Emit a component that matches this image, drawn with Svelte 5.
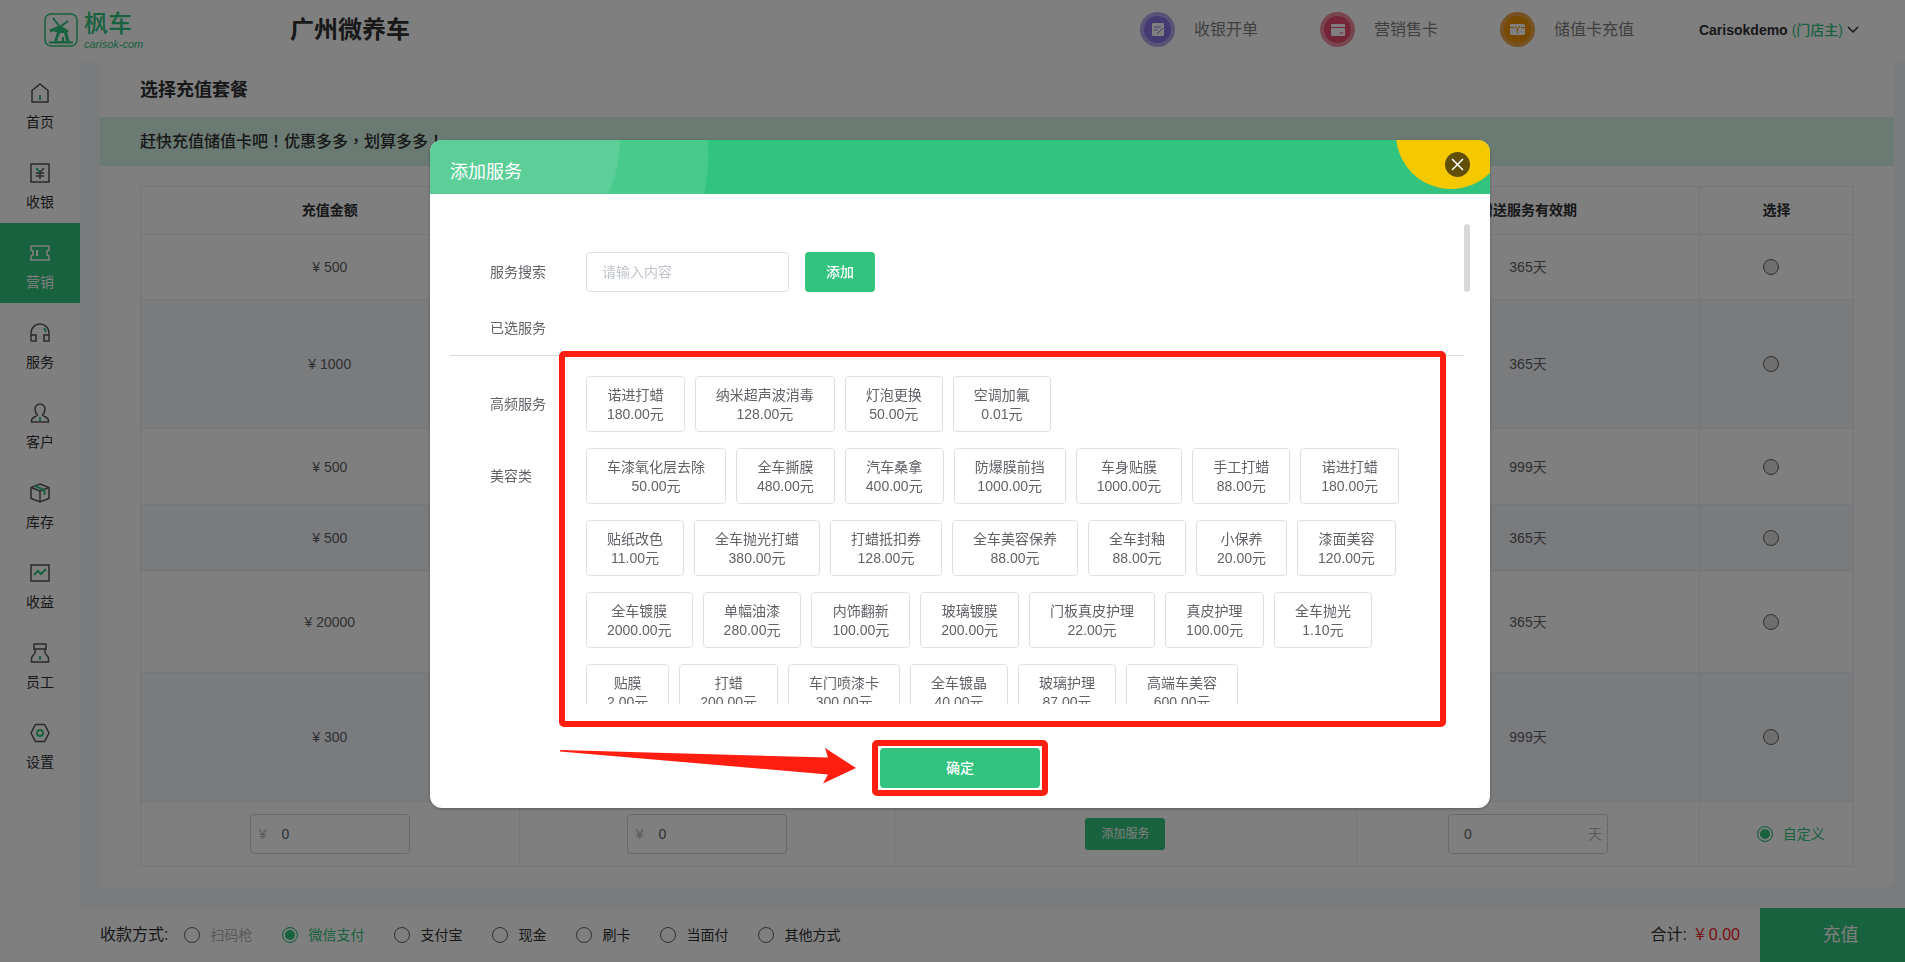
<script lang="ts">
  interface Service {
    name: string;
    price: string;
  }

  const green = "#32c47e";

  const menu = [
    { label: "首页", dark: "M2 7.5 10 1l8 6.5V19H2z", accent: "M10 12v5" },
    {
      label: "收银",
      dark: "M1 1h18v18H1zM10 9l4-4M10 9v7M6 10h8M6 13h8",
      accent: "M6 5l4 4",
    },
    {
      label: "营销",
      dark: "M1 3h18v4l-2 1v4l2 1v4H1v-4l2-1V8L1 7z",
      accent: "M7 7v6",
    },
    {
      label: "服务",
      dark: "M1 18v-8a9 9 0 0 1 18 0v8h-5v-6h5M1 12h5v6H1",
      accent: "M14 5l2 4",
    },
    {
      label: "客户",
      dark: "M7.5 12C5.8 10.5 5 8.5 5 6a5 5 0 0 1 10 0c0 2.5-.8 4.5-2.5 6 1 2 6 2 6 5.500V19h-17v-1.500C1.500 14 6.500 14 7.500 12z",
      accent: "M10 14v4",
    },
    {
      label: "库存",
      dark: "M10 1l9 3.5v11L10 19l-9-3.5v-11zM1 4.5 10 8l9-3.5M10 8v11",
      accent: "M5 3l9.5 4v5",
    },
    { label: "收益", dark: "M1 2h18v16H1z", accent: "M4 12l4-4 3 3 5-5" },
    {
      label: "员工",
      dark: "M4 1h12v5H4zM5 6v3c0 3-3.500 3-3.500 7v3h17v-3c0-4-3.500-4-3.500-7V6",
      accent: "M10 13v4",
    },
    {
      label: "设置",
      dark: "M5.5 1.5h9l4.5 8.5-4.5 8.5h-9L1 10z",
      accent: "M10 7a3 3 0 1 0 0 6 3 3 0 0 0 0-6z",
    },
  ];
  const activeMenu = "营销";

  const packages = [
    { amount: 500, days: 365, height: 65 },
    { amount: 1000, days: 365, height: 129 },
    { amount: 500, days: 999, height: 76 },
    { amount: 500, days: 365, height: 66 },
    { amount: 20000, days: 365, height: 102 },
    { amount: 300, days: 999, height: 129 },
  ];

  const payments = ["扫码枪", "微信支付", "支付宝", "现金", "刷卡", "当面付", "其他方式"];
  let payment = $state("微信支付");
  let selected = $state("custom");
  let keyword = $state("");

  function parse(list: string): Service[] {
    return list.split(" ").map((item) => {
      const [name, price] = item.split(":");
      return { name, price };
    });
  }

  const groups = [
    {
      title: "高频服务",
      services: parse("诺进打蜡:180.00 纳米超声波消毒:128.00 灯泡更换:50.00 空调加氟:0.01"),
    },
    {
      title: "美容类",
      services: parse(
        "车漆氧化层去除:50.00 全车撕膜:480.00 汽车桑拿:400.00 防爆膜前挡:1000.00 车身贴膜:1000.00 手工打蜡:88.00 诺进打蜡:180.00 " +
          "贴纸改色:11.00 全车抛光打蜡:380.00 打蜡抵扣券:128.00 全车美容保养:88.00 全车封釉:88.00 小保养:20.00 漆面美容:120.00 " +
          "全车镀膜:2000.00 单幅油漆:280.00 内饰翻新:100.00 玻璃镀膜:200.00 门板真皮护理:22.00 真皮护理:100.00 全车抛光:1.10 " +
          "贴膜:2.00 打蜡:200.00 车门喷漆卡:300.00 全车镀晶:40.00 玻璃护理:87.00 高端车美容:600.00"
      ),
    },
  ];
</script>

<div class="page">
  <header class="topbar">
    <a class="logo" href="#home">
      <svg width="34" height="34" viewBox="0 0 34 34" fill="none" stroke={green}>
        <rect x="1" y="1" width="32" height="32" rx="6" stroke-width="1.5" />
        <path d="M16 13l-6 6h3l-3 10h16l-4-13z" fill={green} stroke="none" />
        <path d="M16 20l-3 8h5v-4h2v4h2l-2-8z" fill="#fff" stroke="none" />
        <path d="M9 5l7 9M24 8l-8 6" stroke-width="2" />
        <path d="M16 14l-10 4M16 14l8 5" stroke-width="3" />
        <path d="M5 29.500h24" stroke-width="2" />
      </svg>
      <span class="logo-text">
        <span class="logo-cn">枫车</span>
        <span class="logo-en">carisok-com</span>
      </span>
    </a>
    <h1>广州微养车</h1>
    <nav class="quick">
      <a href="#order">
        <svg width="35" height="35" viewBox="0 0 35 35">
          <circle cx="17.5" cy="17.5" r="17.5" fill="#b3a6ea" />
          <circle cx="17.5" cy="17.5" r="13.5" fill="#8b76e4" />
          <rect x="12" y="11" width="12" height="13" rx="1" fill="#fff" />
          <path d="M14 15h7M14 18h4M17 22l6-6" stroke="#8b76e4" fill="none" />
        </svg>
        收银开单
      </a>
      <a href="#card">
        <svg width="35" height="35" viewBox="0 0 35 35">
          <circle cx="17.5" cy="17.5" r="17.5" fill="#f08ca2" />
          <circle cx="17.5" cy="17.5" r="13.5" fill="#ea4a70" />
          <rect x="11" y="12" width="14" height="12" rx="1" fill="#fff" />
          <path d="M11 15.500h14M20 21h3" stroke="#ea4a70" fill="none" />
        </svg>
        营销售卡
      </a>
      <a href="#recharge">
        <svg width="35" height="35" viewBox="0 0 35 35">
          <circle cx="17.5" cy="17.5" r="17.5" fill="#eda548" />
          <circle cx="17.5" cy="17.5" r="13.5" fill="#f09400" />
          <rect x="10" y="12" width="15" height="11" rx="1" fill="#fff" />
          <path d="M10 15.500h4M21 15.500h4M15 14l2.500 3 2.500-3M17.500 17v4" stroke="#f09400" fill="none" />
        </svg>
        储值卡充值
      </a>
    </nav>
    <button class="user" type="button">
      <b>Carisokdemo</b>
      <span>(门店主)</span>
      <svg width="12" height="8" viewBox="0 0 12 8" fill="none" stroke="#333" stroke-width="1.5">
        <path d="M1 1l5 5 5-5" />
      </svg>
    </button>
  </header>

  <div class="body">
    <nav class="sidebar">
      {#each menu as item}
        <a href="#{item.label}" class:active={item.label === activeMenu}>
          <svg width="20" height="20" viewBox="0 0 20 20" fill="none" stroke-width="1.5">
            <path class="dark" d={item.dark} />
            <path class="accent" d={item.accent} />
          </svg>
          {item.label}
        </a>
      {/each}
    </nav>

    <div class="content">
      <main>
        <section class="card">
          <h2>选择充值套餐</h2>
          <p class="banner">赶快充值储值卡吧！优惠多多，划算多多！</p>
          <table>
            <colgroup>
              <col class="c-amount" />
              <col class="c-bonus" />
              <col class="c-service" />
              <col class="c-days" />
              <col class="c-select" />
            </colgroup>
            <thead>
              <tr>
                <th>充值金额</th>
                <th>赠送金额</th>
                <th>赠送服务</th>
                <th>赠送服务有效期</th>
                <th>选择</th>
              </tr>
            </thead>
            <tbody>
              {#each packages as row, i}
                <tr style="height: {row.height}px">
                  <td>¥ {row.amount}</td>
                  <td></td>
                  <td></td>
                  <td>{row.days}天</td>
                  <td>
                    <input class="pick" type="radio" name="package" value={String(i)} aria-label="¥ {row.amount}" bind:group={selected} />
                  </td>
                </tr>
              {/each}
              <tr class="custom">
                <td><label class="field"><i>¥</i><input type="text" value="0" /></label></td>
                <td><label class="field"><i>¥</i><input type="text" value="0" /></label></td>
                <td><button class="add-service" type="button">添加服务</button></td>
                <td><label class="field days"><input type="text" value="0" /><i>天</i></label></td>
                <td>
                  <label class="choice checked">
                    <input type="radio" name="package" value="custom" bind:group={selected} />自定义
                  </label>
                </td>
              </tr>
            </tbody>
          </table>
        </section>
      </main>

      <footer class="paybar">
        <span class="pay-title">收款方式:</span>
        <div class="pay-list">
          {#each payments as name}
            <label class="choice" class:checked={payment === name} class:disabled={name === "扫码枪"}>
              <input type="radio" name="payment" value={name} disabled={name === "扫码枪"} bind:group={payment} />{name}
            </label>
          {/each}
        </div>
        <span class="total">合计: <em>¥ 0.00</em></span>
        <button class="recharge" type="button">充值</button>
      </footer>
    </div>
  </div>
</div>

<div class="overlay">
  <div class="modal" role="dialog" aria-labelledby="modal-title">
    <div class="modal-head">
      <svg class="blobs" width="320" height="54" viewBox="0 0 320 54" fill="#fff" fill-opacity="0.11">
        <circle cx="78" cy="15" r="200" />
        <circle cx="63" cy="0" r="127" />
      </svg>
      <svg class="corner" width="94" height="54" viewBox="0 0 94 54">
        <circle cx="55" cy="-6" r="55" fill="#f5c800" />
      </svg>
      <h3 id="modal-title">添加服务</h3>
      <button class="close" type="button" aria-label="关闭">
        <svg width="25" height="25" viewBox="0 0 25 25">
          <circle cx="12.5" cy="12.5" r="12.5" fill="#614f08" />
          <path d="M7 7l11 11M18 7L7 18" stroke="#fff" stroke-width="1.5" />
        </svg>
      </button>
    </div>

    <div class="modal-body">
      <div class="scroll">
        <div class="row search">
          <label class="row-label" for="keyword">服务搜索</label>
          <input id="keyword" type="text" placeholder="请输入内容" bind:value={keyword} />
          <button class="primary" type="button">添加</button>
        </div>
        <div class="row chosen">
          <span class="row-label">已选服务</span>
        </div>
        {#each groups as group}
          <div class="row group">
            <span class="row-label">{group.title}</span>
            <div class="services">
              {#each group.services as service}
                <button class="service" type="button">
                  <span>{service.name}</span>
                  <span>{service.price}元</span>
                </button>
              {/each}
            </div>
          </div>
        {/each}
      </div>
      <div class="thumb"></div>
    </div>

    <div class="modal-foot">
      <div class="confirm-wrap">
        <button class="primary confirm" type="button">确定</button>
        <div class="mark mark-confirm"></div>
      </div>
    </div>

    <div class="mark mark-services"></div>
    <svg class="arrow" width="296" height="36" viewBox="0 0 296 36">
      <path d="M0 2L268 9.5 265 0 296 20 263 35.5 268 26.5 0 3.5z" fill="#ff1e10" />
    </svg>
  </div>
</div>

<style>
  :global(body) {
    margin: 0;
    background: #f4f6fa;
  }

  .page,
  .overlay {
    font-family: "Liberation Sans", "Noto Sans CJK SC", sans-serif;
    font-size: 14px;
    line-height: 20px;
    color: #606266;
  }

  .page *,
  .overlay * {
    box-sizing: border-box;
  }

  button,
  input {
    font: inherit;
    color: inherit;
  }

  button {
    border: 0;
    padding: 0;
    background: none;
    cursor: pointer;
  }

  a {
    color: inherit;
    text-decoration: none;
  }

  svg {
    display: block;
    flex: none;
  }

  .page {
    display: flex;
    flex-direction: column;
    min-height: 100vh;
  }

  .topbar {
    display: flex;
    align-items: center;
    height: 63px;
    padding: 0 46px 4px 44px;
    background: #fff;
  }

  .logo {
    display: flex;
    align-items: center;
    gap: 6px;
    width: 246px;
    color: #32c47e;
  }

  .logo-text {
    display: flex;
    flex-direction: column;
  }

  .logo-cn {
    font-size: 24px;
    line-height: 28px;
    font-weight: 500;
  }

  .logo-en {
    font-size: 11px;
    line-height: 12px;
    font-style: italic;
  }

  h1 {
    margin: 0 auto 0 0;
    font-size: 24px;
    line-height: 32px;
    color: #303133;
  }

  .quick {
    display: flex;
  }

  .quick a {
    display: flex;
    align-items: center;
    gap: 19px;
    width: 180px;
    font-size: 16px;
    color: #808080;
  }

  .user {
    display: flex;
    align-items: center;
    gap: 4px;
    margin-left: 19px;
    color: #303133;
  }

  .user span {
    color: #32c47e;
    font-weight: 500;
  }

  .body {
    display: flex;
    flex: 1;
  }

  .sidebar {
    flex: none;
    width: 80px;
    background: #fff;
  }

  .sidebar a {
    display: flex;
    flex-direction: column;
    align-items: center;
    gap: 9px;
    height: 80px;
    padding-top: 20px;
    color: #303133;
  }

  .sidebar .dark {
    stroke: #555;
  }

  .sidebar .accent {
    stroke: #32c47e;
    stroke-width: 2;
  }

  .sidebar .active {
    background: #32c47e;
    color: #fff;
  }

  .sidebar .active path {
    stroke: #fff;
  }

  .content {
    display: flex;
    flex-direction: column;
    flex: 1;
    min-width: 0;
  }

  main {
    flex: 1;
    padding: 0 11px 20px 20px;
  }

  .card {
    padding-bottom: 21px;
    background: #fff;
    border-radius: 0 0 8px 8px;
  }

  h2 {
    margin: 0;
    padding: 14px 40px;
    font-size: 18px;
    line-height: 26px;
    color: #303133;
  }

  .banner {
    margin: 0 0 20px;
    padding: 12px 40px;
    background: #d6f4e4;
    font-family: "Liberation Sans", "Noto Sans CJK TC", sans-serif;
    font-size: 16px;
    line-height: 25px;
    font-weight: 500;
    color: #303133;
  }

  table {
    width: calc(100% - 80px);
    margin: 0 40px;
    border-collapse: collapse;
    table-layout: fixed;
    text-align: center;
  }

  .c-amount {
    width: 22.1%;
  }

  .c-bonus {
    width: 21.9%;
  }

  .c-service {
    width: 27%;
  }

  .c-days {
    width: 20%;
  }

  .c-select {
    width: 9%;
  }

  th,
  td {
    padding: 0;
    border: 1px solid #ebedf2;
  }

  th {
    height: 48px;
    padding-bottom: 2px;
    color: #303133;
  }

  tbody tr:nth-child(even) {
    background: #f4f6fa;
  }

  .custom {
    height: 65px;
  }

  input[type="radio"] {
    appearance: none;
    flex: none;
    width: 16px;
    height: 16px;
    margin: 0;
    border: 1px solid #606266;
    border-radius: 50%;
    background: #fff;
  }

  input[type="radio"]:checked {
    border-color: #32c47e;
    background: #32c47e;
    box-shadow: inset 0 0 0 2px #fff;
  }

  tbody input.pick {
    display: block;
    margin: 0 auto;
    position: relative;
    right: 5px;
    background: #dcdcdc;
  }

  .choice {
    display: flex;
    align-items: center;
    gap: 10px;
  }

  .choice.checked {
    color: #32c47e;
  }

  .choice.disabled {
    color: #b4b4b4;
  }

  .custom .choice {
    padding-left: 57px;
  }

  .field {
    display: flex;
    align-items: center;
    width: 160px;
    height: 40px;
    margin: 0 auto;
    padding: 0 8px;
    border: 1px solid #d0d3da;
    border-radius: 4px;
  }

  .field input {
    flex: 1;
    min-width: 0;
    padding: 0 0 0 15px;
    border: 0;
    background: none;
    outline: 0;
  }

  .field i {
    font-style: normal;
    color: #b4b4b4;
  }

  .field.days {
    padding: 0 5px 0 0;
  }

  .add-service {
    width: 80px;
    height: 32px;
    border-radius: 3px;
    background: #32c47e;
    color: #fff;
    font-size: 12px;
  }

  .paybar {
    display: flex;
    align-items: center;
    height: 54px;
    padding-left: 20px;
    background: #fff;
    color: #303133;
  }

  .pay-title,
  .total {
    font-size: 16px;
  }

  .pay-list {
    display: flex;
    gap: 30px;
    margin: 0 auto 0 16px;
  }

  .total {
    margin-right: 20px;
  }

  .total em {
    margin-left: 4px;
    font-style: normal;
    color: #f5222d;
  }

  .recharge {
    align-self: stretch;
    width: 145px;
    padding-left: 16px;
    background: #32c47e;
    color: #fff;
    font-size: 18px;
  }

  .overlay {
    position: fixed;
    inset: 0;
    display: flex;
    justify-content: center;
    align-items: flex-start;
    padding: 140px 0 0 15px;
    background: rgba(0, 0, 0, 0.5);
    overflow: hidden;
  }

  .modal {
    position: relative;
    width: 1060px;
    background: #fff;
    border-radius: 12px;
    box-shadow: 0 1px 3px rgba(0, 0, 0, 0.3);
  }

  .modal-head {
    position: relative;
    display: flex;
    align-items: center;
    justify-content: space-between;
    height: 54px;
    padding: 0 20px;
    border-radius: 12px 12px 0 0;
    background: #32c47e;
    overflow: hidden;
  }

  .blobs {
    position: absolute;
    top: 0;
    left: 0;
  }

  .corner {
    position: absolute;
    top: 0;
    right: 0;
  }

  h3 {
    position: relative;
    margin: 0;
    padding-top: 10px;
    font-size: 18px;
    line-height: 24px;
    font-weight: 400;
    color: #fff;
  }

  .close {
    position: relative;
    margin-bottom: 5px;
  }

  .modal-body {
    position: relative;
    padding: 30px 20px 0;
  }

  .scroll {
    height: 480px;
    overflow: auto;
    scrollbar-width: none;
  }

  .thumb {
    position: absolute;
    top: 30px;
    right: 20px;
    width: 6px;
    height: 68px;
    border-radius: 3px;
    background: #d8d8d8;
  }

  .row {
    display: flex;
    margin-right: 6px;
  }

  .row-label {
    flex: none;
    width: 96px;
    margin-right: 40px;
    padding-left: 40px;
  }

  .search {
    align-items: center;
    padding-top: 28px;
  }

  .search input {
    width: 203px;
    height: 40px;
    margin-right: 16px;
    padding: 0 15px;
    border: 1px solid #dcdfe6;
    border-radius: 4px;
    background: #fff;
  }

  .search input::placeholder {
    color: #c0c4cc;
  }

  .primary {
    width: 70px;
    height: 40px;
    border-radius: 4px;
    background: #32c47e;
    color: #fff;
    font-weight: 500;
  }

  .chosen {
    margin-bottom: 20px;
    padding: 26px 0 17px;
    border-bottom: 1px solid #d8d8d8;
  }

  .group {
    margin-bottom: 16px;
  }

  .group .row-label {
    padding-top: 18px;
  }

  .services {
    display: flex;
    flex-wrap: wrap;
    gap: 16px 10px;
    padding-right: 20px;
  }

  .service {
    display: flex;
    flex-direction: column;
    align-items: center;
    padding: 9px 20px 7px;
    border: 1px solid #dcdfe6;
    border-radius: 4px;
    line-height: 19px;
  }

  .modal-foot {
    display: flex;
    justify-content: center;
    padding: 44px 0 20px;
  }

  .confirm-wrap {
    position: relative;
  }

  .confirm {
    display: block;
    width: 160px;
  }

  .mark {
    position: absolute;
    border: 6px solid #ff1e10;
    border-radius: 5px;
    pointer-events: none;
  }

  .mark-confirm {
    inset: -8px;
  }

  .mark-services {
    top: 211px;
    left: 129px;
    width: 887px;
    height: 376px;
  }

  .arrow {
    position: absolute;
    top: 608px;
    left: 130px;
  }
</style>
